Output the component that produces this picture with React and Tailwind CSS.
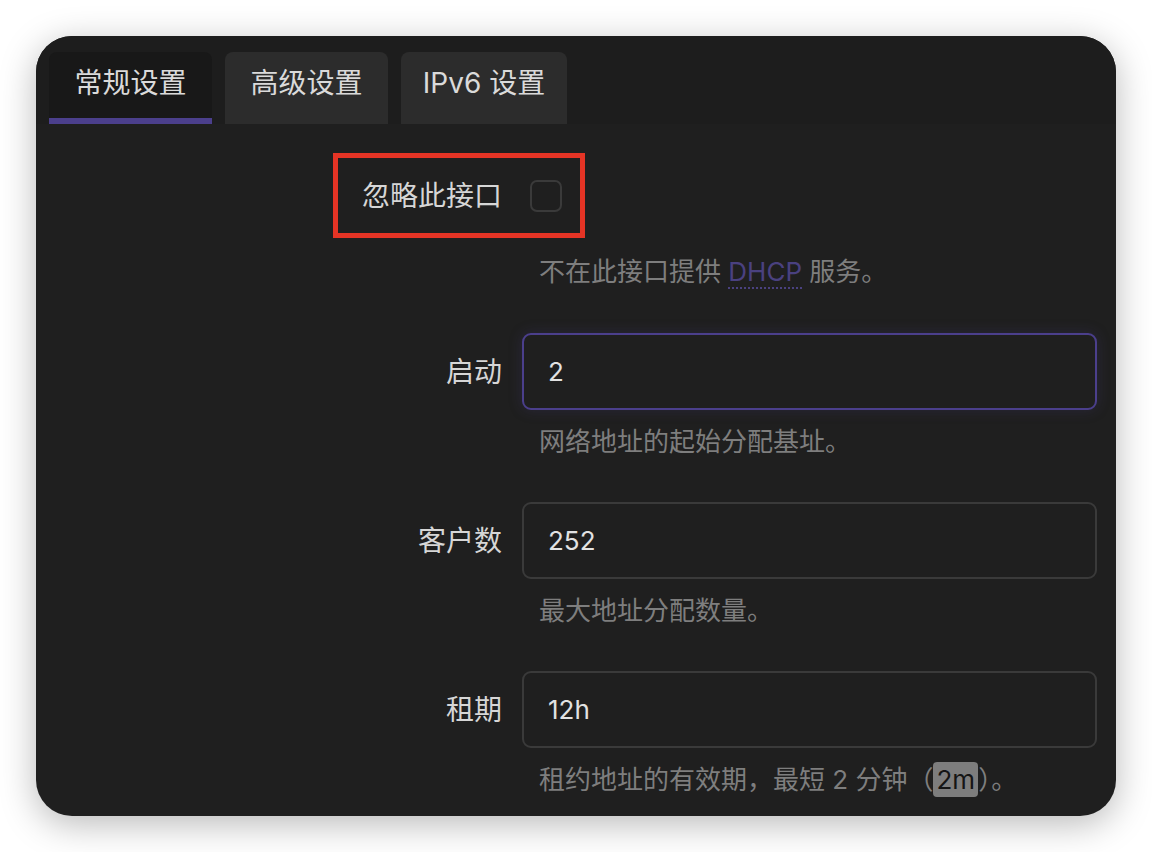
import React from 'react'

const fields = [
  { label: '启动', value: '2', desc: '网络地址的起始分配基址。', focus: true },
  { label: '客户数', value: '252', desc: '最大地址分配数量。' },
  { label: '租期', value: '12h', desc: 'lease' },
]

function Tab({ children, active }) {
  return (
    <div
      className={
        'relative flex h-[72px] items-start justify-center rounded-t-[8px] pt-[11px] text-[28px] leading-[40px] text-[#dadada] ' +
        (active ? 'bg-[#181818]' : 'bg-[#2c2c2c]')
      }
    >
      {children}
      {active && <div className="absolute bottom-0 left-0 right-0 h-[6px] bg-[#4b3f8c]" />}
    </div>
  )
}

function Field({ f }) {
  return (
    <div className="flex flex-col">
      <div className="flex items-center">
        <div className="w-[486px] pr-[20px] text-right text-[28px] leading-[40px] text-[#d6d6d6]">{f.label}</div>
        <div
          className={
            'flex h-[77px] w-[575px] items-center rounded-[9px] border-2 bg-[#1f1f1f] pl-[24px] text-[26px] text-[#e2e2e2] ' +
            (f.focus ? 'border-[#4b3f8c] shadow-[0_0_14px_rgba(75,63,140,0.25)]' : 'border-[#3a3a3a]')
          }
        >
          {f.value}
        </div>
      </div>
      <div className="ml-[503px] mt-[16px] text-[26px] leading-[32px] text-[#7e7e7e]">
        {f.desc === 'lease' ? (
          <>
            租约地址的有效期，最短 2 分钟（
            <code className="rounded-[4px] bg-[#7d7d7d] px-[3px] py-[2px] text-[#151515] [font-family:inherit]">2m</code>
            ）。
          </>
        ) : (
          f.desc
        )}
      </div>
    </div>
  )
}

export default function App() {
  return (
    <div className="min-h-[852px] w-[1152px] bg-white p-[36px] [font-family:'Inter','Noto_Sans_CJK_SC',sans-serif]">
      <div className="flex h-[780px] w-[1080px] flex-col overflow-hidden rounded-[36px] bg-[#1f1f1f] shadow-[0_8px_36px_rgba(0,0,0,0.28)]">
        <div className="flex h-[88px] items-end gap-[13px] bg-[#1d1d1d] pl-[13px]">
          <div className="w-[163px]"><Tab active>常规设置</Tab></div>
          <div className="w-[163px]"><Tab>高级设置</Tab></div>
          <div className="w-[166px]"><Tab>IPv6 设置</Tab></div>
        </div>

        <div className="flex flex-col">
          <div className="relative mt-[40px] flex h-[64px] items-center">
            <div className="w-[486px] pr-[20px] text-right text-[28px] leading-[40px] text-[#d6d6d6]">忽略此接口</div>
            <div className="ml-[8px] h-[32px] w-[32px] rounded-[7px] border-2 border-[#3a3a3a] bg-[#1f1f1f]" />
            <div className="absolute left-[297px] top-[-11px] h-[85px] w-[252px] border-[5px] border-[#e53425]" />
          </div>
          <div className="ml-[503px] mt-[28px] text-[26px] leading-[32px] text-[#7e7e7e]">
            不在此接口提供{' '}
            <span className="border-b-2 border-dotted border-[#4a4180] text-[#4a4180]">DHCP</span> 服务。
          </div>

          <div className="mt-[45px] flex flex-col gap-[44px]">
            {fields.map(f => (
              <Field key={f.label} f={f} />
            ))}
          </div>
        </div>
      </div>
    </div>
  )
}
